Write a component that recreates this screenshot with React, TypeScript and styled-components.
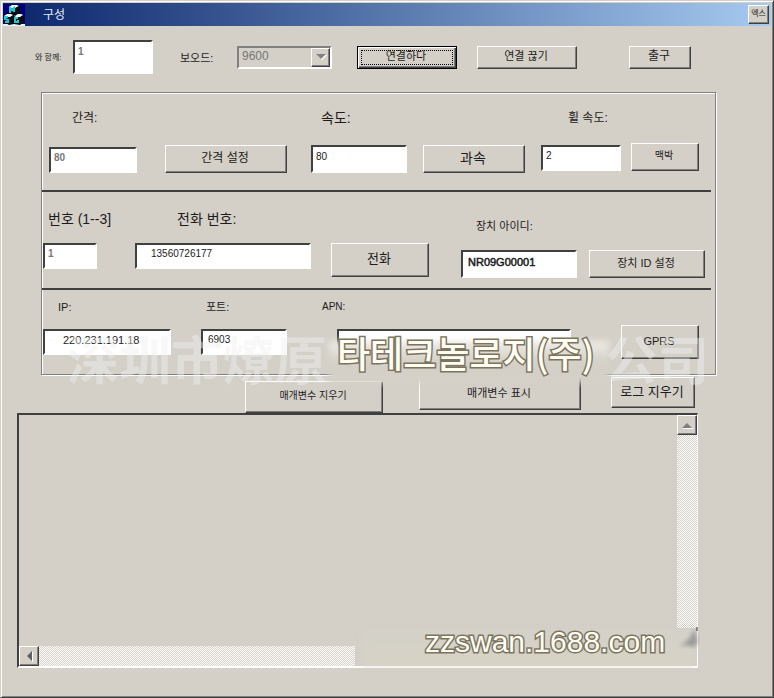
import React from "react";
import styled, { createGlobalStyle, css } from "styled-components";

const FACE = "#d4d0c8";
const SHADOW = "#808080";
const DARK = "#404040";
const FONT = '"Liberation Sans", "Noto Sans CJK KR", sans-serif';

const GlobalStyle = createGlobalStyle`
  * { box-sizing: border-box; }
  body { margin: 0; background: ${FACE}; font-family: ${FONT}; color: #1c1c1c; }
  button, input, select, textarea { font-family: inherit; color: inherit; border-radius: 0; margin: 0; }
`;

const raised = css`
  border: 1px solid;
  border-color: #fff ${DARK} ${DARK} #fff;
  box-shadow: inset -1px -1px 0 ${SHADOW};
  background: ${FACE};
`;

const Window = styled.main`
  position: relative;
  display: flex;
  flex-direction: column;
  min-height: 100vh;
  padding: 2px;
  border: 1px solid;
  border-color: ${FACE} ${DARK} ${DARK} ${FACE};
  box-shadow: inset 1px 1px 0 #fff, inset -1px -1px 0 ${SHADOW};
  background: ${FACE};
`;

const TitleBar = styled.header`
  display: flex;
  align-items: center;
  height: 23px;
  padding-right: 2px;
  background: linear-gradient(90deg, #0a246a, #a6caf0);
`;

const Title = styled.h1`
  flex: 1;
  margin: 0 0 0 18px;
  font-size: 12px;
  line-height: 20px;
  font-weight: 400;
  color: #e6ebf5;
`;

const CloseButton = styled.button`
  ${raised}
  width: 21px;
  height: 19px;
  padding: 0 0 2px;
  font-size: 8px;
  line-height: 12px;
  white-space: nowrap;
`;

const Toolbar = styled.div`
  display: grid;
  grid-template-columns: 38fr 80fr 27fr 57fr 95fr 25fr 100fr 20fr 100fr 52fr 62fr 80fr;
  align-items: center;
  padding: 14px 0 18px 32px;
`;

const GroupBox = styled.section`
  margin: 0 55px 0 38px;
  border: 1px solid ${SHADOW};
  box-shadow: 1px 1px 0 #fff, inset 1px 1px 0 #fff;
`;

const Rule = styled.hr`
  height: 2px;
  margin: 0 4px 0 0;
  border: 0;
  background: ${DARK};
`;

const Section = styled.div`
  display: grid;
  align-items: end;
`;

const SpeedSection = styled(Section)`
  grid-template-columns: 7fr 88fr 28fr 122fr 24fr 96fr 16fr 102fr 16fr 80fr 10fr 68fr 16fr;
  grid-template-rows: 20px 30px;
  row-gap: 16px;
  padding: 14px 0 17px;
`;

const PhoneSection = styled(Section)`
  grid-template-columns: 1fr 54fr 38fr 176fr 20fr 98fr 32fr 116fr 12fr 116fr 10fr;
  grid-template-rows: 26px 35px;
  row-gap: 8px;
  padding: 17px 0 10px;
`;

const NetworkSection = styled(Section)`
  grid-template-columns: 1fr 128fr 30fr 86fr 50fr 234fr 50fr 78fr 16fr;
  grid-template-rows: 18px 34px;
  row-gap: 10px;
  align-items: center;
  padding: 7px 0 15px;
`;

const Actions = styled.div`
  display: grid;
  grid-template-columns: 242fr 138fr 36fr 162fr 30fr 84fr 76fr;
  height: 38px;
  padding-top: 2px;
  flex: none;
`;

type Align = "start" | "center" | "end";

const Label = styled.label<{ $col: string; $size?: number; $indent?: number; $align?: Align }>`
  grid-column: ${(p) => p.$col};
  align-self: ${(p) => p.$align ?? "center"};
  padding-left: ${(p) => p.$indent ?? 0}px;
  padding-top: 1px;
  font-size: ${(p) => p.$size ?? 11}px;
  line-height: 18px;
  white-space: nowrap;
`;

const TextBox = styled.input<{
  $col: string;
  $h?: number;
  $size?: number;
  $indent?: number;
  $align?: Align;
  $strong?: boolean;
  $faint?: boolean;
}>`
  grid-column: ${(p) => p.$col};
  align-self: ${(p) => p.$align ?? "auto"};
  width: 100%;
  min-width: 0;
  height: ${(p) => p.$h ?? 26}px;
  padding: 0 2px ${(p) => ((p.$h ?? 26) > 30 ? 12 : 5)}px ${(p) => p.$indent ?? 3}px;
  border: 2px solid;
  border-color: ${DARK} #fff #fff ${DARK};
  outline: 0;
  background: #fff;
  font-size: ${(p) => p.$size ?? 10}px;
  ${(p) => p.$strong && css`-webkit-text-stroke: 0.5px #1c1c1c;`}
  ${(p) => p.$faint && css`color: #777; font-weight: 700;`}
`;

const Button = styled.button<{ $col: string; $h?: number; $size?: number; $align?: Align }>`
  ${raised}
  grid-column: ${(p) => p.$col};
  align-self: ${(p) => p.$align ?? "auto"};
  min-width: 0;
  height: ${(p) => p.$h ?? 28}px;
  padding: 0 2px 2px 0;
  font-size: ${(p) => p.$size ?? 11}px;
  line-height: 16px;
  white-space: nowrap;
`;

const DefaultButton = styled(Button)`
  border: 1px solid #000;
  box-shadow: inset 1px 1px 0 #fff, inset -1px -1px 0 ${DARK}, inset -2px -2px 0 ${SHADOW};
  outline: 1px dotted #000;
  outline-offset: -5px;
`;

const Combo = styled.div`
  grid-column: 5;
  display: grid;
  height: 23px;
  border: 2px solid;
  border-color: ${SHADOW} #fff #fff ${SHADOW};
  > * { grid-area: 1 / 1; }
`;

const ComboSelect = styled.select`
  appearance: none;
  width: 100%;
  height: 19px;
  padding: 0 20px 2px 3px;
  border: 0;
  background: ${FACE};
  font-size: 12px;
  line-height: 17px;
  &:disabled { color: #777; opacity: 1; }
`;

const ComboArrow = styled.span`
  ${raised}
  display: grid;
  place-items: center;
  justify-self: end;
  width: 19px;
  height: 19px;
  pointer-events: none;
`;

const LogFrame = styled.section`
  display: grid;
  flex: 1;
  grid-template-columns: 1fr 20px;
  grid-template-rows: 1fr 20px;
  min-height: 120px;
  margin: 0 73px 27px 14px;
  border: 2px solid;
  border-color: ${DARK} #fff #fff ${DARK};
  border-right-width: 1px;
`;

const LogText = styled.textarea`
  width: 100%;
  height: 100%;
  padding: 4px;
  border: 0;
  outline: 0;
  resize: none;
  background: ${FACE};
  font-size: 11px;
`;

const VerticalBar = styled.div`
  display: flex;
  flex-direction: column;
  padding-bottom: 18px;
`;

const HorizontalBar = styled.div`
  display: flex;
  width: 51%;
`;

const ArrowButton = styled.button`
  ${raised}
  display: grid;
  place-items: center;
  flex: none;
  width: 20px;
  height: 20px;
  padding: 0;
`;

const Track = styled.div`
  flex: 1;
  background: repeating-conic-gradient(#fff 0 25%, ${FACE} 0 50%) 0 0 / 2px 2px;
`;

const Watermark = styled.div`
  position: absolute;
  pointer-events: none;
  white-space: nowrap;
`;

const CompanyMark = styled(Watermark)<{ $left: number }>`
  top: 331px;
  left: ${(p) => p.$left}px;
  font-family: "Noto Sans CJK SC", sans-serif;
  font-size: 52px;
  line-height: 52px;
  font-weight: 700;
  color: rgba(240, 240, 240, 0.45);
`;

const Outlined = styled(Watermark)`
  color: #fffdf2;
  -webkit-text-stroke: 3px #7b745f;
  paint-order: stroke fill;
`;

const KoreanMark = styled(Outlined)`
  top: 327px;
  left: 336px;
  font-family: "Noto Sans CJK KR", sans-serif;
  font-size: 36px;
  line-height: 48px;
  font-weight: 500;
`;

const SiteMark = styled(Outlined)`
  top: 622px;
  left: 424px;
  font-size: 30px;
  line-height: 38px;
`;

const Glow = styled(Watermark)`
  top: 340px;
  left: 328px;
  width: 280px;
  height: 42px;
  background: linear-gradient(#efede6, #d4d0c8 50%);
  filter: blur(3px);
`;

const SiteGlow = styled(Watermark)`
  top: 630px;
  left: 362px;
  width: 330px;
  height: 34px;
  background: linear-gradient(#d4d1c8, #d7d3c6);
  filter: blur(3px);
`;

const Smudge = styled(Watermark)`
  top: 624px;
  left: 670px;
  width: 50px;
  height: 38px;
`;

function AppIcon() {
  return (
    <svg width="22" height="22" viewBox="0 0 22 22" aria-hidden="true">
      <rect width="22" height="21" fill="#00007c" />
      <path d="M0 20h22v2H0z" fill="#e8f4f8" />
      <path d="M6 3l3-2h6l2 2v7l4 3v5l-4 3-6-1-5 1-5-3v-7l5-2z" fill="#06090b" />
      <path d="M6 3l3-2h5l2 1-3 2H8zM1 12l3-2h4l2 1-3 2H3zM11 12l3-2h4l2 1-3 2h-4z" fill="#f0ffff" />
      <path d="M7 9V4l2 2 2-2v4M5 13H2v2l3 1v2H2M15 14h-3v4h3v-2" fill="none" stroke="#20c8d0" strokeWidth="2" />
      <path d="M12 4l4-2v7l-4 3zM6 14l4-2v6l-4 3zM16 14l4-2v6l-4 3z" fill="#061014" />
    </svg>
  );
}

export default function App() {
  return (
    <>
      <GlobalStyle />
      <Window>
        <TitleBar>
          <AppIcon />
          <Title>구성</Title>
          <CloseButton type="button">엑스</CloseButton>
        </TitleBar>

        <Toolbar>
          <Label htmlFor="com" $col="1" $size={8}>와 함께:</Label>
          <TextBox id="com" $col="2" $h={34} $faint defaultValue="1" />
          <Label htmlFor="baud" $col="4">보오드:</Label>
          <Combo>
            <ComboSelect id="baud" disabled defaultValue="9600">
              <option>9600</option>
            </ComboSelect>
            <ComboArrow>
              <svg width="12" height="8" viewBox="0 0 12 8" aria-hidden="true">
                <path d="M2 2h10L7 7z" fill="#fff" />
                <path d="M1 1h10L6 6z" fill="#808080" />
              </svg>
            </ComboArrow>
          </Combo>
          <DefaultButton type="button" $col="7" $h={23}>연결하다</DefaultButton>
          <Button type="button" $col="9" $h={23}>연결 끊기</Button>
          <Button type="button" $col="11" $h={23} $size={12}>출구</Button>
        </Toolbar>

        <GroupBox>
          <SpeedSection>
            <Label htmlFor="interval" $col="2 / 5" $size={12} $indent={23}>간격:</Label>
            <Label htmlFor="speed" $col="6 / 9" $size={14} $indent={10}>속도:</Label>
            <Label htmlFor="wheel" $col="10 / 13" $size={12} $indent={27}>휠 속도:</Label>
            <TextBox id="interval" $col="2" $faint defaultValue="80" />
            <Button type="button" $col="4" $size={12}>간격 설정</Button>
            <TextBox id="speed" $col="6" $h={28} defaultValue="80" />
            <Button type="button" $col="8" $size={14}>과속</Button>
            <TextBox id="wheel" $col="10" $align="center" defaultValue="2" />
            <Button type="button" $col="12" $size={10} $align="start">맥박</Button>
          </SpeedSection>
          <Rule />
          <PhoneSection>
            <Label htmlFor="number" $col="2 / 4" $size={14} $indent={5} $align="start">번호 (1--3]</Label>
            <Label htmlFor="phone" $col="4" $size={14} $indent={42} $align="start">전화 번호:</Label>
            <Label htmlFor="device" $col="8 / 11" $indent={15} $align="end">장치 아이디:</Label>
            <TextBox id="number" $col="2" $align="start" $faint defaultValue="1" />
            <TextBox id="phone" $col="4" $align="start" $indent={14} defaultValue="13560726177" />
            <Button type="button" $col="6" $h={34} $size={13} $align="start">전화</Button>
            <TextBox id="device" $col="8" $h={28} $size={11} $indent={5} $strong defaultValue="NR09G00001" />
            <Button type="button" $col="10">장치 ID 설정</Button>
          </PhoneSection>
          <Rule />
          <NetworkSection>
            <Label htmlFor="ip" $col="2" $indent={15}>IP:</Label>
            <Label htmlFor="port" $col="4" $indent={5}>포트:</Label>
            <Label htmlFor="apn" $col="5 / 7" $size={10} $indent={35}>APN:</Label>
            <TextBox id="ip" $col="2" $size={11} $indent={18} defaultValue="220.231.191.18" />
            <TextBox id="port" $col="4" $indent={5} defaultValue="6903" />
            <TextBox id="apn" $col="6" />
            <Button type="button" $col="8" $h={34}>GPRS</Button>
          </NetworkSection>
        </GroupBox>

        <Actions>
          <Button type="button" $col="2" $h={32} $size={10} $align="end">매개변수 지우기</Button>
          <Button type="button" $col="4" $h={33}>매개변수 표시</Button>
          <Button type="button" $col="6" $h={31} $size={13}>로그 지우기</Button>
        </Actions>

        <LogFrame>
          <LogText readOnly aria-label="로그" />
          <VerticalBar>
            <ArrowButton type="button" aria-label="위로">
              <svg width="12" height="8" viewBox="0 0 12 8" aria-hidden="true">
                <path d="M2 7h10v1H2z" fill="#fff" />
                <path d="M1 7h10L6 2z" fill="#808080" />
              </svg>
            </ArrowButton>
            <Track />
          </VerticalBar>
          <HorizontalBar>
            <ArrowButton type="button" aria-label="왼쪽으로">
              <svg width="8" height="12" viewBox="0 0 8 12" aria-hidden="true">
                <path d="M7 2v10h1V2z" fill="#fff" />
                <path d="M7 1v10L2 6z" fill="#606060" />
              </svg>
            </ArrowButton>
            <Track />
          </HorizontalBar>
        </LogFrame>

        <CompanyMark $left={66}>深圳市燎原</CompanyMark>
        <CompanyMark $left={604}>公司</CompanyMark>
        <Glow />
        <KoreanMark>타테크놀로지(주)</KoreanMark>
        <SiteGlow />
        <Smudge>
          <svg width="50" height="38" viewBox="0 0 50 38" aria-hidden="true">
            <defs>
              <filter id="soft"><feGaussianBlur stdDeviation="2" /></filter>
            </defs>
            <path d="M8 22l10-8 6-10 3 14-5 4-8-2z" fill="#77777a" opacity=".6" filter="url(#soft)" />
            <path d="M26 2v4" stroke="#333" />
          </svg>
        </Smudge>
        <SiteMark>zzswan.1688.com</SiteMark>
      </Window>
    </>
  );
}
